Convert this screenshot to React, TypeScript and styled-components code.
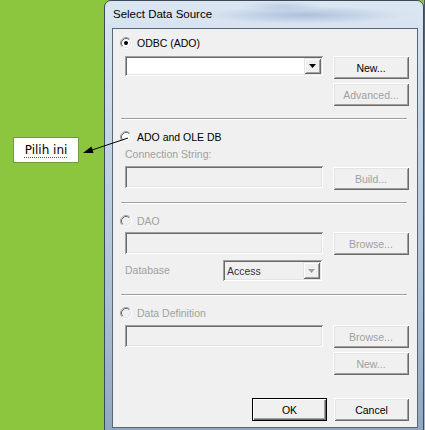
import React from "react";
import styled, { createGlobalStyle } from "styled-components";

const Global = createGlobalStyle`
  html, body { margin: 0; padding: 0; }
  body { width: 425px; height: 430px; overflow: hidden; background: #8cc63f; }
  #root { width: 425px; height: 430px; }
`;

const Page = styled.div`
  position: relative;
  display: flex;
  width: 425px;
  height: 430px;
  overflow: hidden;
  background: #8cc63f;
`;

const Margin = styled.div`
  flex: none;
  width: 104px;
  box-sizing: border-box;
  padding: 137px 0 0 13px;
`;

const Note = styled.div`
  width: 66px;
  height: 26px;
  box-sizing: border-box;
  background: #fff;
  border: 1px solid #6f9d3c;
  display: flex;
  align-items: center;
  justify-content: center;
  font: 12px "DejaVu Sans", sans-serif;
  color: #000;
`;

const Misspelt = styled.span`
  text-decoration: underline dotted #e02020;
  text-decoration-thickness: 1px;
  text-underline-offset: 3px;
`;

const Window = styled.div`
  flex: none;
  width: 320px;
  height: 432px;
  box-sizing: border-box;
  border: 1px solid #3c4a58;
  border-radius: 7px 7px 0 0;
  background: linear-gradient(180deg, #dbe6f2 0%, #c9d9eb 25%, #abbfd6 70%, #91a7c0 100%);
  padding: 0 5px 0 7px;
  display: flex;
  flex-direction: column;
`;

const TitleBar = styled.div`
  flex: none;
  height: 27px;
  display: flex;
  align-items: center;
  padding: 0 0 1px 1px;
  box-sizing: border-box;
  font: 11.5px "Liberation Sans", Arial, sans-serif;
  color: #000;
  background:
    radial-gradient(ellipse 100px 9px at 192px 14px, rgba(120, 150, 195, 0.45), rgba(120, 150, 195, 0)),
    radial-gradient(ellipse 40px 5px at 170px 5px, rgba(140, 165, 200, 0.35), rgba(140, 165, 200, 0));
`;

const RightEdge = styled.div`
  flex: 1;
  background: linear-gradient(180deg, #4c5866 0%, #8d9bab 40%, #a9b6c4 100%);
`;

const Client = styled.div`
  flex: none;
  width: 306px;
  height: 400px;
  box-sizing: border-box;
  border: 1px solid #56677a;
  background: #f0f0f0;
  padding: 0 8px 0 12px;
  display: flex;
  flex-direction: column;
  font: 10.5px "Liberation Sans", Arial, sans-serif;
  color: #000;
`;

const RadioRow = styled.div<{ $mt: number; $disabled?: boolean }>`
  display: flex;
  align-items: center;
  gap: 5px;
  height: 16px;
  margin: ${(p) => p.$mt}px 0 0 -5px;
  color: ${(p) => (p.$disabled ? "#a0a0a0" : "#000")};
`;

const Row = styled.div<{ $mt: number }>`
  display: flex;
  align-items: flex-start;
  gap: 10px;
  margin-top: ${(p) => p.$mt}px;
`;

const CenterRow = styled(Row)`
  align-items: center;
  gap: 0;
`;

const Footer = styled.div<{ $mt: number }>`
  display: flex;
  justify-content: flex-end;
  gap: 7px;
  margin-top: ${(p) => p.$mt}px;
`;

const Spacer = styled.div`
  width: 198px;
  flex: none;
`;

const Label = styled.div<{ $mt?: number; $w?: number }>`
  height: 13px;
  line-height: 13px;
  margin-top: ${(p) => p.$mt ?? 0}px;
  width: ${(p) => (p.$w ? `${p.$w}px` : "auto")};
  flex: none;
  color: #a0a0a0;
`;

const Separator = styled.div<{ $mt: number }>`
  height: 0;
  border-top: 1px solid #a0a0a0;
  border-bottom: 1px solid #ffffff;
  margin: ${(p) => p.$mt}px 2px 0 -4px;
`;

const Button = styled.button<{ $w?: number; $disabled?: boolean; $default?: boolean }>`
  flex: none;
  width: ${(p) => p.$w ?? 76}px;
  height: 23px;
  box-sizing: border-box;
  margin: 0;
  padding: 0;
  background: #f0f0f0;
  font: 10.5px "Liberation Sans", Arial, sans-serif;
  color: ${(p) => (p.$disabled ? "#a0a0a0" : "#000")};
  border: ${(p) => (p.$default ? "1px solid #000" : "none")};
  box-shadow: ${(p) =>
    p.$default
      ? "inset 1px 1px #fff, inset -1px -1px #696969, inset -2px -2px #a0a0a0"
      : "inset 1px 1px #fff, inset -1px -1px #696969, inset 2px 2px #e3e3e3, inset -2px -2px #a0a0a0"};
  display: flex;
  align-items: center;
  justify-content: center;
`;

const Field = styled.div<{ $w?: number; $h?: number; $white?: boolean }>`
  flex: none;
  width: ${(p) => p.$w ?? 198}px;
  height: ${(p) => p.$h ?? 22}px;
  box-sizing: border-box;
  background: ${(p) => (p.$white ? "#fff" : "#f0f0f0")};
  box-shadow: inset 1px 1px #a0a0a0, inset -1px -1px #fff, inset 2px 2px #696969, inset -2px -2px #e3e3e3;
  display: flex;
  align-items: center;
  padding: 2px;
`;

const FieldText = styled.div`
  flex: 1;
  padding-left: 2px;
  color: #333;
`;

const DropButton = styled.div`
  margin-left: auto;
  width: 17px;
  height: 100%;
  box-sizing: border-box;
  background: #f0f0f0;
  box-shadow: inset 1px 1px #e3e3e3, inset -1px -1px #696969, inset 2px 2px #fff, inset -2px -2px #a0a0a0;
  display: flex;
  align-items: center;
  justify-content: center;
`;

const Overlay = styled.svg`
  position: absolute;
  left: 0;
  top: 0;
  pointer-events: none;
`;

function Radio({ checked, disabled }: { checked?: boolean; disabled?: boolean }) {
  return (
    <svg width="12" height="12" viewBox="0 0 12 12" style={{ flex: "none" }}>
      <circle cx="6" cy="6" r="4" fill={disabled ? "#f0f0f0" : "#fff"} />
      <path d="M2.11 9.89 A5.5 5.5 0 0 1 9.89 2.11" fill="none" stroke="#a0a0a0" strokeWidth="1" />
      <path d="M9.89 2.11 A5.5 5.5 0 0 1 2.11 9.89" fill="none" stroke="#ffffff" strokeWidth="1" />
      <path d="M2.82 9.18 A4.5 4.5 0 0 1 9.18 2.82" fill="none" stroke="#696969" strokeWidth="1" />
      <path d="M9.18 2.82 A4.5 4.5 0 0 1 2.82 9.18" fill="none" stroke="#e3e3e3" strokeWidth="1" />
      {checked && <circle cx="6" cy="6" r="2" fill="#000" />}
    </svg>
  );
}

function Arrow({ disabled }: { disabled?: boolean }) {
  return (
    <svg width="7" height="4" viewBox="0 0 7 4">
      <path d="M0 0 H7 L3.5 4 Z" fill={disabled ? "#a0a0a0" : "#000"} />
    </svg>
  );
}

export default function App() {
  return (
    <>
      <Global />
      <Page>
        <Margin>
          <Note>
            <Misspelt>Pilih ini</Misspelt>
          </Note>
        </Margin>
        <Window>
          <TitleBar>Select Data Source</TitleBar>
          <Client>
            <RadioRow $mt={6}>
              <Radio checked />
              <span>ODBC (ADO)</span>
            </RadioRow>
            <Row $mt={5}>
              <Field $h={20} $white>
                <DropButton>
                  <Arrow />
                </DropButton>
              </Field>
              <Button>New...</Button>
            </Row>
            <Row $mt={4}>
              <Spacer />
              <Button $disabled>Advanced...</Button>
            </Row>
            <Separator $mt={12} />

            <RadioRow $mt={9}>
              <Radio />
              <span>ADO and OLE DB</span>
            </RadioRow>
            <Label $mt={3}>Connection String:</Label>
            <Row $mt={5}>
              <Field />
              <Button $disabled style={{ marginTop: 1 }}>Build...</Button>
            </Row>
            <Separator $mt={12} />

            <RadioRow $mt={9} $disabled>
              <Radio disabled />
              <span>DAO</span>
            </RadioRow>
            <Row $mt={3}>
              <Field />
              <Button $disabled>Browse...</Button>
            </Row>
            <CenterRow $mt={5}>
              <Label $w={98}>Database</Label>
              <Field $w={99} $h={21}>
                <FieldText>Access</FieldText>
                <DropButton>
                  <Arrow disabled />
                </DropButton>
              </Field>
            </CenterRow>
            <Separator $mt={13} />

            <RadioRow $mt={9} $disabled>
              <Radio disabled />
              <span>Data Definition</span>
            </RadioRow>
            <Row $mt={4}>
              <Field />
              <Button $disabled>Browse...</Button>
            </Row>
            <Row $mt={4}>
              <Spacer />
              <Button $disabled>New...</Button>
            </Row>
            <Footer $mt={23}>
              <Button $w={75} $default>OK</Button>
              <Button $w={75}>Cancel</Button>
            </Footer>
          </Client>
        </Window>
        <RightEdge />
        <Overlay width="425" height="430" viewBox="0 0 425 430">
          <line x1="128" y1="138" x2="92" y2="150" stroke="#000" strokeWidth="1" />
          <path d="M83 153 L93.6 153.1 L91.4 146.5 Z" fill="#000" />
        </Overlay>
      </Page>
    </>
  );
}
